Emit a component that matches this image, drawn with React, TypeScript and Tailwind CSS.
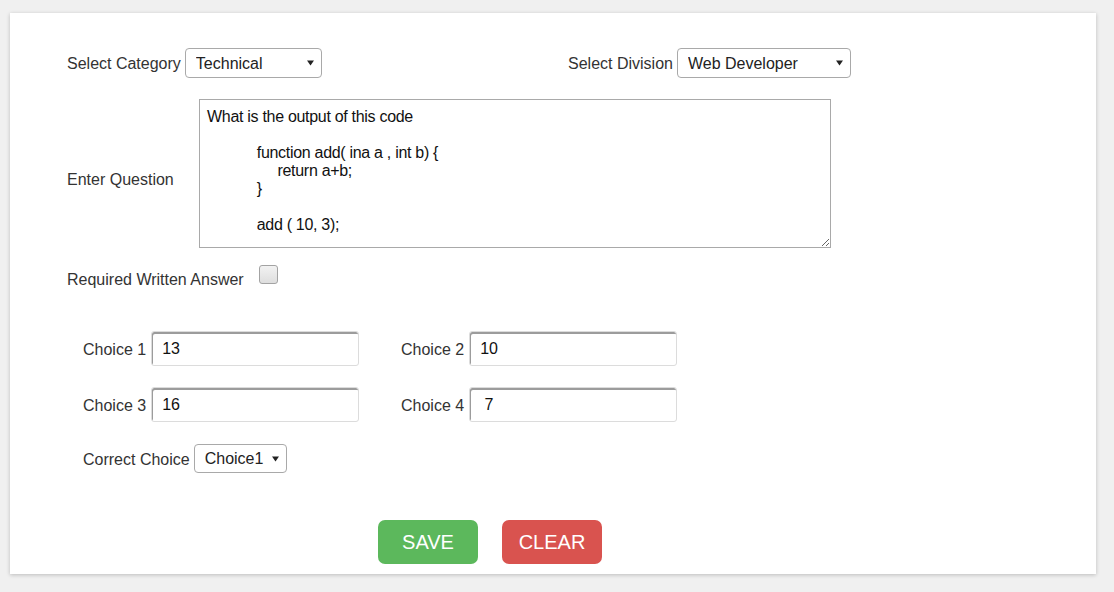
import React from 'react';

const QUESTION = `What is the output of this code

            function add( ina a , int b) {
                 return a+b;
            }

            add ( 10, 3);`;

function Arrow() {
  return (
    <svg
      className="pointer-events-none absolute right-[8px] top-1/2 -translate-y-1/2"
      width="7"
      height="6"
      viewBox="0 0 7 6"
    >
      <path d="M0 0.5 L7 0.5 L3.5 5.5 Z" fill="#222" />
    </svg>
  );
}

function Select({ value, options, width }: { value: string; options: string[]; width: string }) {
  return (
    <div className={`relative ${width}`}>
      <select
        defaultValue={value}
        className="h-full w-full appearance-none rounded-[4px] border border-[#a9a9a9] bg-white pl-[10px] pr-[20px] pt-px text-[16px] text-[#222] outline-none"
      >
        {options.map((o) => (
          <option key={o}>{o}</option>
        ))}
      </select>
      <Arrow />
    </div>
  );
}

function ChoiceInput({ label, value }: { label: string; value: string }) {
  return (
    <div className="flex items-center gap-[5px]">
      <span className="pt-[2px] text-[16px] leading-[18px] text-[#333]">{label}</span>
      <input
        defaultValue={value}
        className="h-[35px] w-[208px] rounded-[3px] border border-[#dcdcdc] bg-white pl-[10px] pt-px text-[16px] text-[#111] shadow-[inset_1px_2px_0_#9c9c9c] outline-none"
      />
    </div>
  );
}

export default function App() {
  return (
    <div className="min-h-[592px] bg-[#f0f0f0] pt-[13px] pl-[10px] font-['Liberation_Sans',Arial,sans-serif]">
      <div className="h-[561px] w-[1086px] bg-white pt-[35px] pl-[57px] shadow-[0_1px_4px_rgba(0,0,0,0.22)]">
        {/* category / division */}
        <div className="flex h-[30px] items-stretch">
          <div className="flex w-[501px] items-center gap-[4px]">
            <span className="pt-[2px] text-[16px] text-[#333]">Select Category</span>
            <Select value="Technical" options={['Technical', 'Non Technical']} width="w-[137px] h-[30px]" />
          </div>
          <div className="flex items-center gap-[4px]">
            <span className="pt-[2px] text-[16px] text-[#333]">Select Division</span>
            <Select value="Web Developer" options={['Web Developer', 'Designer']} width="w-[174px] h-[30px]" />
          </div>
        </div>

        {/* question */}
        <div className="mt-[21px] flex items-start">
          <span className="mt-[72px] w-[132px] text-[16px] leading-[18px] text-[#333]">Enter Question</span>
          <textarea
            defaultValue={QUESTION}
            className="h-[149px] w-[632px] border border-[#a9a9a9] bg-white px-[7px] pt-[8px] text-[16px] leading-[18px] tracking-[-0.3px] text-[#111] outline-none"
          />
        </div>

        {/* written answer */}
        <div className="mt-[17px] flex items-start gap-[15px]">
          <span className="mt-[6px] text-[16px] leading-[18px] text-[#333]">Required Written Answer</span>
          <span className="h-[19px] w-[19px] rounded-[3px] border border-[#a3a3a3] bg-gradient-to-b from-[#f2f2f2] to-[#dedede]" />
        </div>

        {/* choices */}
        <div className="mt-[42px] pl-[16px]">
          <div className="grid grid-cols-[318px_auto] gap-y-[21px]">
            <ChoiceInput label="Choice 1" value="13" />
            <ChoiceInput label="Choice 2" value="10" />
            <ChoiceInput label="Choice 3" value="16" />
            <ChoiceInput label="Choice 4" value=" 7" />
          </div>

          <div className="mt-[22px] flex items-center gap-[4px]">
            <span className="pt-[2px] text-[16px] text-[#333]">Correct Choice</span>
            <Select
              value="Choice1"
              options={['Choice1', 'Choice2', 'Choice3', 'Choice4']}
              width="w-[93px] h-[29px]"
            />
          </div>
        </div>

        {/* actions */}
        <div className="mt-[47px] flex gap-[24px] pl-[311px]">
          <button className="h-[44px] w-[100px] rounded-[7px] bg-[#5cb85c] text-[20px] text-white">SAVE</button>
          <button className="h-[44px] w-[100px] rounded-[7px] bg-[#d9534f] text-[20px] text-white">CLEAR</button>
        </div>
      </div>
    </div>
  );
}
